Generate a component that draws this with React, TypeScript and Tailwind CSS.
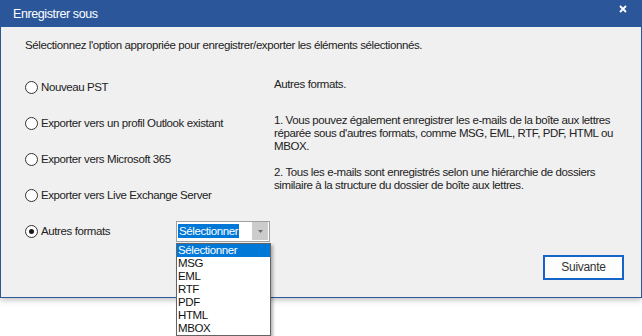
import React from "react";

function Radio({ checked }: { checked?: boolean }) {
  return (
    <span className="flex h-[13px] w-[13px] shrink-0 items-center justify-center rounded-full border border-[#333333] bg-white">
      {checked && <span className="h-[5px] w-[5px] rounded-full bg-[#1a1a1a]" />}
    </span>
  );
}

function Row({ label, checked, children }: { label: string; checked?: boolean; children?: React.ReactNode }) {
  return (
    <div className="flex h-[36px] items-center">
      <div className={children ? "flex w-[151px] items-center gap-[3px] whitespace-nowrap" : "flex items-center gap-[3px] whitespace-nowrap"}>
        <Radio checked={checked} />
        <span>{label}</span>
      </div>
      {children}
    </div>
  );
}

export default function App() {
  const items = ["Sélectionner", "MSG", "EML", "RTF", "PDF", "HTML", "MBOX"];
  return (
    <div className="relative h-[336px] w-[642px] overflow-hidden bg-white font-['Liberation_Sans',Arial,sans-serif] text-[11.5px] leading-[13px] tracking-[-0.4px] text-[#222222]">
      <div className="flex h-[298px] w-[642px] flex-col border border-t-0 border-[#2b579a] bg-[#f0f0f0] shadow-[0_2px_6px_rgba(0,0,0,0.25)]">
        <div className="flex h-[27px] shrink-0 items-center justify-between bg-[#2b579a] pl-[12px] pr-[14px] pt-[2px] text-[12.5px] tracking-[-0.4px] text-white">
          <span>Enregistrer sous</span>
          <svg width="8" height="8" viewBox="0 0 8 8" className="-mt-[12px]">
            <path d="M1 1 L7 7 M7 1 L1 7" stroke="white" strokeWidth="1.8" />
          </svg>
        </div>
        <div className="mt-[12px] pl-[24px]">
          Sélectionnez l'option appropriée pour enregistrer/exporter les éléments sélectionnés.
        </div>
        <div className="mt-[17px] flex flex-1">
          <div className="w-[273px] shrink-0 pl-[24px]">
            <Row label="Nouveau PST" />
            <Row label="Exporter vers un profil Outlook existant" />
            <Row label="Exporter vers Microsoft 365" />
            <Row label="Exporter vers Live Exchange Server" />
            <Row label="Autres formats" checked>
              <div className="relative">
                <div className="flex h-[21px] w-[94px] items-center border border-[#a0a0a0] bg-white pl-[1px] pr-[1px]">
                  <span className="flex-1">
                    <span className="bg-[#0078d7] px-[1px] py-[1px] text-white">Sélectionner</span>
                  </span>
                  <span className="flex h-[18px] w-[16px] items-center justify-center bg-[#cccccc]">
                    <svg width="5" height="3" viewBox="0 0 5 3">
                      <path d="M0 0 H5 L2.5 3 Z" fill="#6d6d6d" />
                    </svg>
                  </span>
                </div>
                <div className="absolute left-0 top-[22px] z-10 w-[95px] border border-[#646464] bg-white shadow-[2px_2px_3px_rgba(0,0,0,0.3)]">
                  {items.map((it, i) => (
                    <div
                      key={it}
                      className={
                        i === 0
                          ? "h-[13px] bg-[#0078d7] pl-[1px] leading-[13px] text-white"
                          : "h-[13px] pl-[1px] leading-[13px] text-[#111111]"
                      }
                    >
                      {it}
                    </div>
                  ))}
                </div>
              </div>
            </Row>
          </div>
          <div className="flex-1 pr-[16px] pt-[9px]">
            <p>Autres formats.</p>
            <p className="mt-[23px]">
              1. Vous pouvez également enregistrer les e-mails de la boîte aux lettres réparée sous d'autres formats, comme MSG, EML, RTF, PDF, HTML ou MBOX.
            </p>
            <p className="mt-[13px]">
              2. Tous les e-mails sont enregistrés selon une hiérarchie de dossiers similaire à la structure du dossier de boîte aux lettres.
            </p>
          </div>
        </div>
        <div className="flex justify-end pb-[17px] pr-[17px]">
          <button className="h-[25px] w-[81px] border-2 border-[#1565c8] bg-[#fdfdfd] text-[12px] tracking-[-0.3px] text-[#333333]">
            Suivante
          </button>
        </div>
      </div>
    </div>
  );
}
